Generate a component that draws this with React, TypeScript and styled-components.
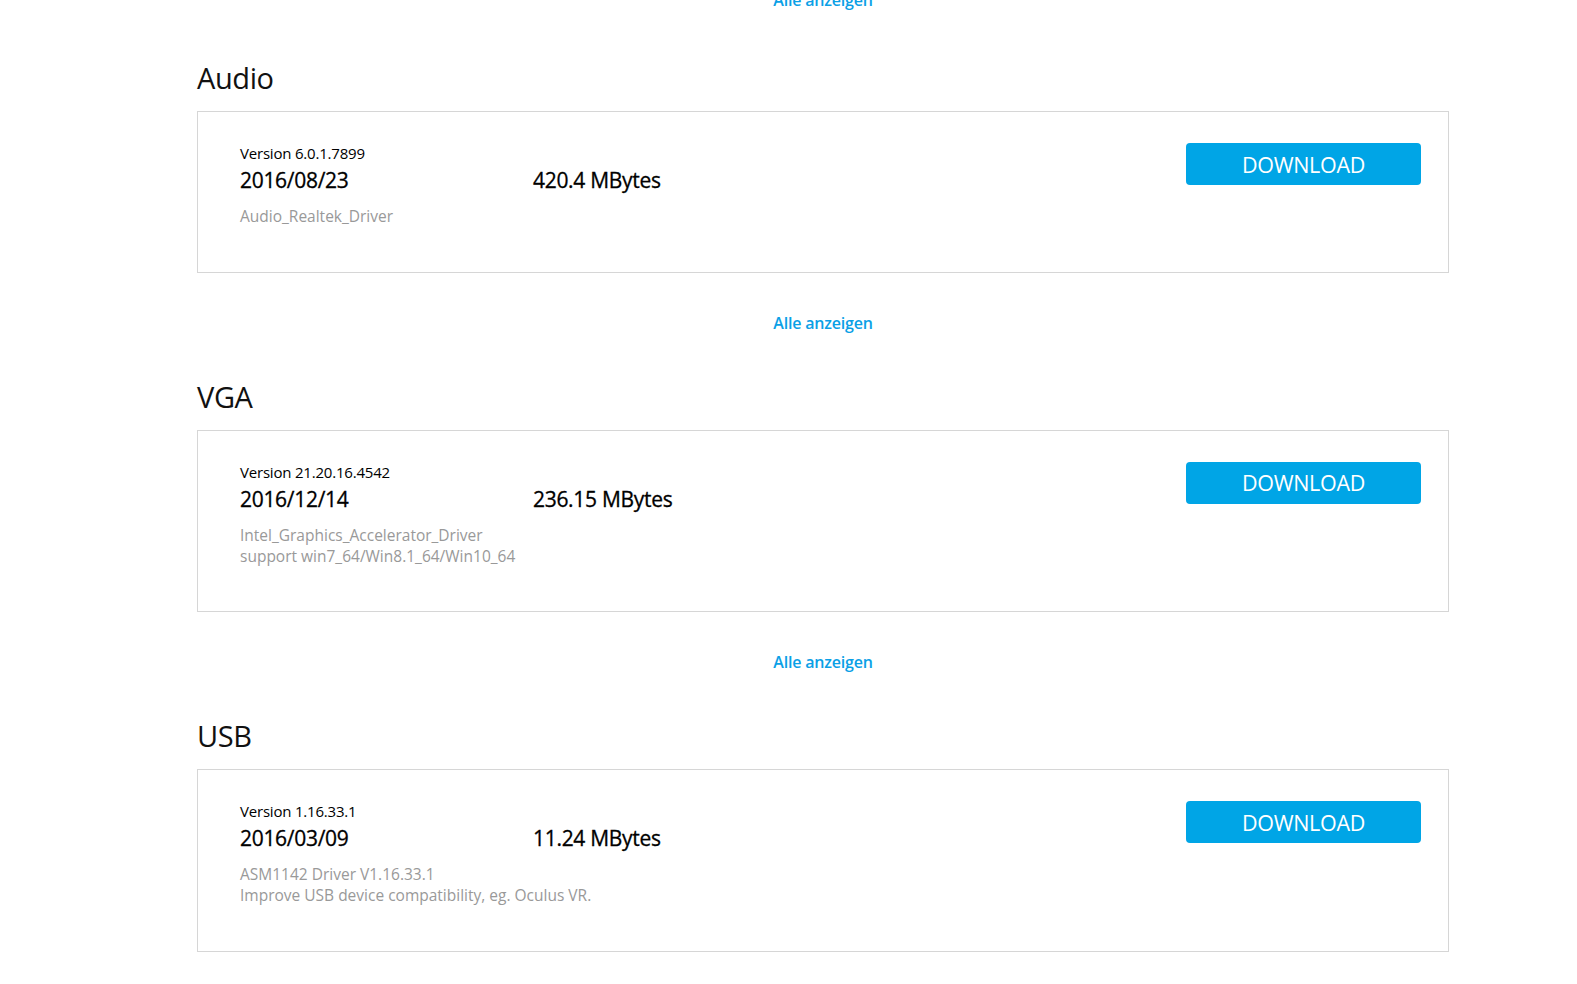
import React from 'react';
import styled, { createGlobalStyle } from 'styled-components';

const GlobalStyle = createGlobalStyle`
    html, body {
        margin: 0;
        padding: 0;
        background: #fff;
        overflow: hidden;
    }
    body {
        font-family: 'Open Sans', 'Noto Sans', sans-serif;
        color: #000;
    }
`;

const Viewport = styled.div`
    height: 984px;
    overflow: hidden;
`;

const Page = styled.div`
    width: 1252px;
    margin-left: 197px;
    display: flex;
    flex-direction: column;
`;

const Section = styled.section<{ $first?: boolean }>`
    display: flex;
    flex-direction: column;
    margin-top: ${p => (p.$first ? 48 : 44)}px;
`;

const Heading = styled.h2`
    margin: 0 0 14px;
    font-size: 29px;
    line-height: 38px;
    font-weight: 400;
    letter-spacing: -0.4px;
    color: #111;
`;

const Card = styled.div`
    border: 1px solid #d6d6d6;
    padding: 31px 27px 44.5px 42px;
    display: flex;
    justify-content: space-between;
    align-items: flex-start;
`;

const Info = styled.div`
    display: flex;
    flex-direction: column;
`;

const Version = styled.div`
    font-size: 15px;
    line-height: 20px;
    letter-spacing: -0.2px;
    color: #000;
`;

const Stats = styled.div`
    display: grid;
    grid-template-columns: 293px auto;
    margin-top: 3px;
    font-size: 21px;
    line-height: 28px;
    letter-spacing: -0.3px;
    color: #000;
    -webkit-text-stroke: 0.3px #000;
`;

const Description = styled.div`
    margin-top: 12px;
    font-size: 15.5px;
    line-height: 21px;
    color: #999;
`;

const Button = styled.button`
    width: 235px;
    height: 42px;
    border: none;
    border-radius: 4px;
    background: #00a5e6;
    color: #fff;
    font-family: 'Open Sans', 'Noto Sans', sans-serif;
    font-size: 21.5px;
    letter-spacing: -0.3px;
    cursor: pointer;
`;

const ShowAll = styled.a<{ $top?: number }>`
    display: block;
    align-self: center;
    margin-top: ${p => (p.$top !== undefined ? p.$top : 39)}px;
    font-size: 16px;
    line-height: 22px;
    font-weight: 600;
    letter-spacing: -0.2px;
    color: #0aa0e6;
    text-decoration: none;
    cursor: pointer;
`;

interface Driver {
    title: string;
    version: string;
    date: string;
    size: string;
    lines: string[];
}

const drivers: Driver[] = [
    {
        title: 'Audio',
        version: 'Version 6.0.1.7899',
        date: '2016/08/23',
        size: '420.4 MBytes',
        lines: ['Audio_Realtek_Driver'],
    },
    {
        title: 'VGA',
        version: 'Version 21.20.16.4542',
        date: '2016/12/14',
        size: '236.15 MBytes',
        lines: ['Intel_Graphics_Accelerator_Driver', 'support win7_64/Win8.1_64/Win10_64'],
    },
    {
        title: 'USB',
        version: 'Version 1.16.33.1',
        date: '2016/03/09',
        size: '11.24 MBytes',
        lines: ['ASM1142 Driver V1.16.33.1', 'Improve USB device compatibility, eg. Oculus VR.'],
    },
];

const App: React.FC = () => {
    return (
        <Viewport>
            <GlobalStyle />
            <Page>
                <ShowAll $top={-11}>Alle anzeigen</ShowAll>
                {drivers.map((d, i) => (
                    <Section key={d.title} $first={i === 0}>
                        <Heading>{d.title}</Heading>
                        <Card>
                            <Info>
                                <Version>{d.version}</Version>
                                <Stats>
                                    <span>{d.date}</span>
                                    <span>{d.size}</span>
                                </Stats>
                                <Description>
                                    {d.lines.map(l => (
                                        <div key={l}>{l}</div>
                                    ))}
                                </Description>
                            </Info>
                            <Button>DOWNLOAD</Button>
                        </Card>
                        {i < drivers.length - 1 && <ShowAll>Alle anzeigen</ShowAll>}
                    </Section>
                ))}
            </Page>
        </Viewport>
    );
};

export default App;
